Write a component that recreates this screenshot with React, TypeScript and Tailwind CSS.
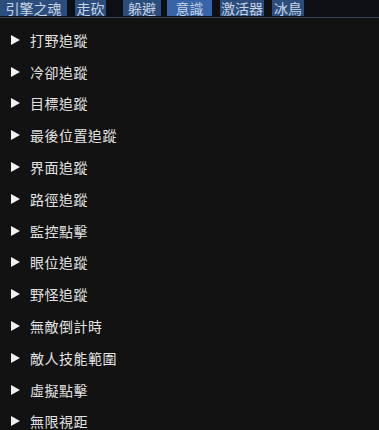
import React from 'react';

const items = [
  '打野追蹤',
  '冷卻追蹤',
  '目標追蹤',
  '最後位置追蹤',
  '界面追蹤',
  '路徑追蹤',
  '監控點擊',
  '眼位追蹤',
  '野怪追蹤',
  '無敵倒計時',
  '敵人技能範圍',
  '虛擬點擊',
  '無限視距',
];

const tab = 'shrink-0 h-[16px] flex items-center justify-center text-[14px] leading-[16px] whitespace-nowrap text-[#c9d3e2]';

export default function App() {
  return (
    <div
      className="w-[379px] h-[430px] overflow-hidden bg-[#121212] text-[#e2e2e2]"
      style={{ fontFamily: '"Noto Sans CJK TC", "Noto Sans", sans-serif' }}
    >
      <div className="flex h-[17px] bg-[#0d0f12]">
        <div className={`${tab} w-[67px] bg-[#2a4d7e]`}>引擎之魂</div>
        <div className={`${tab} w-[31px] ml-[8px] bg-[#2a4d7e]`}>走砍</div>
        <div className={`${tab} w-[38px] ml-[17px] bg-[#2a4d7e]`}>躲避</div>
        <div className={`${tab} w-[45px] ml-[6px] bg-[#3565a8]`}>意識</div>
        <div className={`${tab} w-[44px] ml-[8px] bg-[#2a4d7e]`}>激活器</div>
        <div className={`${tab} w-[32px] ml-[8px] bg-[#2a4d7e]`}>冰鳥</div>
      </div>
      <div className="h-[1px] bg-[#39465a]" />
      <div className="flex flex-col pt-[6px]">
        {items.map((label) => (
          <div key={label} className="flex items-center h-[31.8px] pl-[11px]">
            <svg width="9" height="10" viewBox="0 0 9 10" className="shrink-0">
              <polygon points="0,0 9,5 0,10" fill="#f0f0f0" />
            </svg>
            <span className="ml-[10px] text-[14px] leading-none tracking-[0.5px]">{label}</span>
          </div>
        ))}
      </div>
    </div>
  );
}
